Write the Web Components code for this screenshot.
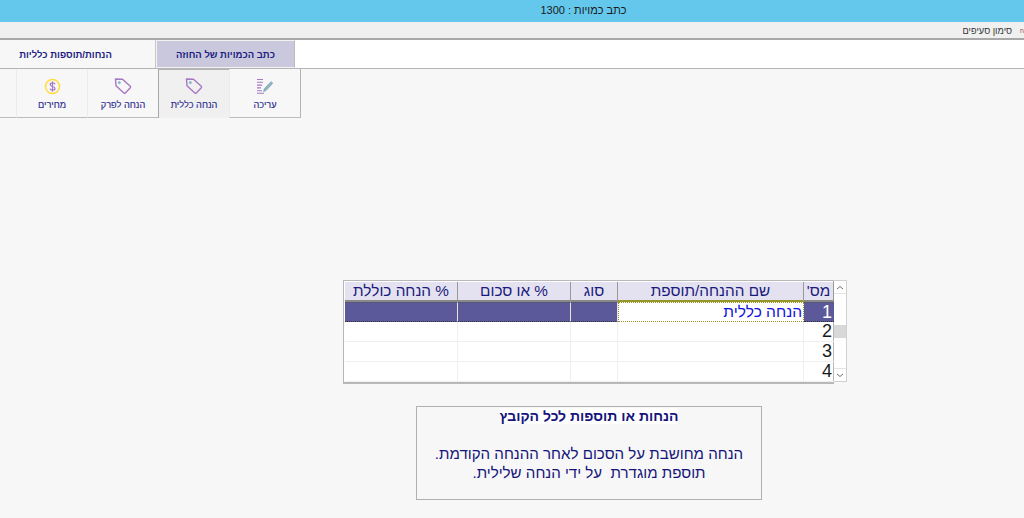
<!DOCTYPE html>
<html lang="he">
<head>
<meta charset="utf-8">
<title>כתב כמויות</title>
<style>
html, body { margin: 0; padding: 0; height: 100%; background: #f7f7f7; overflow: hidden; }
body { width: 1024px; height: 518px; font-family: "Liberation Sans", "DejaVu Sans", sans-serif; display: flex; flex-direction: column; }
</style>
</head>
<body>
<app-titlebar>כתב כמויות : 1300</app-titlebar>
<app-menubar></app-menubar>
<app-tabs></app-tabs>
<app-ribbon></app-ribbon>
<discount-grid></discount-grid>
<info-box></info-box>

<script>
const tagIcon = `<svg width="18" height="17" viewBox="0 0 18 17" fill="none" stroke="#a678c4" stroke-width="1.4" stroke-linejoin="round">
  <path d="M1.500 1 L8.500 1.300 L16.300 8.300 Q17 9 16.300 9.800 L11.300 15 Q10.600 15.700 9.800 15 L2 7.800 Z"/>
  <circle cx="5.300" cy="4.600" r="1.200" fill="#7fb4cc" stroke="#7fb4cc" stroke-width="0.5"/>
</svg>`;

const editIcon = `<svg width="18" height="17" viewBox="0 0 18 17" fill="none">
  <g stroke="#a678c4" stroke-width="1.100">
    <path d="M1 1.500h6M1 4.300h6M1 7.100h5M1 9.900h4M1 12.700h5M1 15.300h7"/>
  </g>
  <path d="M7.500 13.500 L8.300 10.700 L14.500 4.200 Q15.300 3.600 16.200 4.400 Q16.900 5.200 16.100 6 L10 12.600 Z" fill="#8fb4c6" stroke="#6e94a8" stroke-width="0.6"/>
</svg>`;

const dollarIcon = `<svg width="17" height="17" viewBox="0 0 17 17" fill="none">
  <circle cx="8.500" cy="8.500" r="7" stroke="#ffdc3c" stroke-width="1.500"/>
  <path d="M11 6.200 Q10.600 4.900 8.500 4.900 Q6.200 4.900 6.200 6.600 Q6.200 8 8.500 8.500 Q11 9 11 10.500 Q11 12.100 8.500 12.100 Q6.300 12.100 6 10.700 M8.500 3.600V13.400" stroke="#a678c4" stroke-width="1.200"/>
</svg>`;

class AppTitlebar extends HTMLElement {
  constructor() {
    super();
    this.attachShadow({ mode: 'open' }).innerHTML = `
      <style>
        :host { display: flex; box-sizing: border-box; height: 22px; background: #64c8ec; align-items: center; justify-content: center; color: #1a1a1a; font-size: 11px; padding: 0 0 2px 143px; }
      </style>
      <slot></slot>`;
  }
}

class AppMenubar extends HTMLElement {
  constructor() {
    super();
    this.attachShadow({ mode: 'open' }).innerHTML = `
      <style>
        :host { display: flex; box-sizing: border-box; height: 18px; background: #f0f0f0; border-bottom: 2px solid #a8a8a8; direction: rtl; align-items: center; font-size: 9.200px; color: #333; gap: 8px; padding-top: 1px; }
        .next { font-size: 6px; color: #a03030; }
      </style>
      <span class="next">ח</span><span>סימון סעיפים</span>`;
  }
}

class AppTabs extends HTMLElement {
  constructor() {
    super();
    this.attachShadow({ mode: 'open' }).innerHTML = `
      <style>
        :host { display: flex; box-sizing: border-box; height: 29px; background: #fff; border-bottom: 1px solid #b4b4b4; }
        div { box-sizing: border-box; display: flex; align-items: center; justify-content: center; font-size: 9.500px; font-weight: bold; color: #1c1c82; direction: rtl; }
        .off { width: 156px; background: #f7f7f7; border-right: 1px solid #c8c8c8; padding-right: 24px; }
        .on { width: 139px; background: #c9c8dc; border: 1px solid #f2f2f2; border-right-color: #bbb; }
      </style>
      <div class="off">הנחות/תוספות כלליות</div>
      <div class="on">כתב הכמויות של החוזה</div>`;
  }
}

class RibbonButton extends HTMLElement {
  static get observedAttributes() { return ['label', 'icon', 'active']; }
  connectedCallback() { this.render(); }
  attributeChangedCallback() { this.render(); }
  render() {
    if (!this.shadowRoot) this.attachShadow({ mode: 'open' });
    const icons = { tag: tagIcon, edit: editIcon, dollar: dollarIcon };
    const active = this.hasAttribute('active');
    this.shadowRoot.innerHTML = `
      <style>
        :host { display: block; width: 71px; box-sizing: border-box; background: ${active ? '#f0f0f0' : '#f7f7f7'};
          border-left: 1px solid ${active ? '#a8a8a8' : '#ececec'};
          border-top: 1px solid ${active ? '#b4b4b4' : 'transparent'};
          border-bottom: ${active ? '0' : '1px solid #bcbcbc'}; }
        .b { display: flex; flex-direction: column; align-items: center; padding-top: 8px; box-sizing: border-box; gap: 5px; }
        svg { display: block; }
        span { font-size: 9.200px; line-height: 10px; color: #2c2c90; direction: rtl; -webkit-text-stroke: 0.15px #2c2c90; white-space: nowrap; }
      </style>
      <div class="b">${icons[this.getAttribute('icon')] || ''}<span>${this.getAttribute('label') || ''}</span></div>`;
  }
}

class AppRibbon extends HTMLElement {
  constructor() {
    super();
    this.attachShadow({ mode: 'open' }).innerHTML = `
      <style>
        :host { display: flex; box-sizing: border-box; width: 301px; height: 49px; border-right: 1px solid #b4b4b4; }
        .spacer { width: 16px; box-sizing: border-box; border-bottom: 1px solid #bcbcbc; }
      </style>
      <div class="spacer"></div>
      <ribbon-button icon="dollar" label="מחירים"></ribbon-button>
      <ribbon-button icon="tag" label="הנחה לפרק"></ribbon-button>
      <ribbon-button icon="tag" label="הנחה כללית" active></ribbon-button>
      <ribbon-button icon="edit" label="עריכה"></ribbon-button>`;
  }
}

class DiscountGrid extends HTMLElement {
  constructor() {
    super();
    const cols = '113px 113px 47px 186px 30px';
    const heads = ['% הנחה כוללת', '% או סכום', 'סוג', 'שם ההנחה/תוספת', "מס'"];
    const headHtml = heads.map(h => `<div class="h">${h}</div>`).join('');
    const rows = [1, 2, 3, 4].map(n => {
      const sel = n === 1;
      return `<div class="c ${sel ? 'sel' : ''}"></div><div class="c ${sel ? 'sel' : ''}"></div><div class="c ${sel ? 'sel' : ''}"></div>` +
        `<div class="c name ${sel ? 'cur' : ''}">${sel ? 'הנחה כללית' : ''}</div>` +
        `<div class="c num ${sel ? 'sel numsel' : ''}">${n}</div>`;
    }).join('');
    this.attachShadow({ mode: 'open' }).innerHTML = `
      <style>
        :host { display: flex; width: 504px; height: 104px; margin: 162px 0 0 343px; box-sizing: border-box; align-items: flex-start; }
        .grid { box-sizing: border-box; width: 491px; height: 104px; background: #fff; border: 1px solid #b8b8b8; border-bottom-width: 2px; padding: 1px 1px 0 1px; display: grid; grid-template-columns: ${cols}; grid-template-rows: 20px 20px 20px 20px 20px; }
        .h { background: #e4e2f0; color: #1a1a7e; font-size: 15.300px; display: flex; align-items: center; justify-content: center; direction: rtl; border-right: 1px solid #999; border-bottom: 2px solid #888; box-sizing: border-box; white-space: nowrap; }
        .h:nth-child(4) { border-bottom-color: #96962a; }
        .c { box-sizing: border-box; border-right: 1px solid #efefef; border-bottom: 1px solid #efefef; font-size: 15.500px; display: flex; align-items: center; direction: rtl; color: #1a1a1a; }
        .sel { background: #5b5999; border-right-color: #e4e4e4; border-bottom: 1px dotted #333; border-top: 1px dotted #555; }
        .numsel { color: #fff; }
        .name { padding-right: 1px; }
        .cur { color: #1010e0; border: 1px dotted #96962a; }
        .num { padding-right: 2px; border-right: 0; font-size: 18px; }
        .bar { box-sizing: border-box; width: 13px; height: 102px; border: 1px solid #d0d0d0; border-left: 0; background: #fff; display: flex; flex-direction: column; }
        .btn { height: 12px; background: #fff; display: flex; align-items: center; justify-content: center; }
        .top { border-bottom: 1px solid #e4e4e4; }
        .bot { border-top: 1px solid #e4e4e4; }
        .thumb { height: 13px; background: #d8d8d8; margin-top: 31px; }
        .btn svg { display: block; }
      </style>
      <div class="grid">${headHtml}${rows}</div>
      <div class="bar">
        <div class="btn top"><svg width="8" height="5" viewBox="0 0 8 5" fill="none" stroke="#707070"><path d="M1 4L4 1.500L7 4"/></svg></div>
        <div class="thumb"></div>
        <div style="flex:1"></div>
        <div class="btn bot"><svg width="8" height="5" viewBox="0 0 8 5" fill="none" stroke="#707070"><path d="M1 1L4 3.500L7 1"/></svg></div>
      </div>`;
  }
}

class InfoBox extends HTMLElement {
  constructor() {
    super();
    this.attachShadow({ mode: 'open' }).innerHTML = `
      <style>
        :host { display: block; box-sizing: border-box; width: 346px; height: 94px; margin: 22px 0 0 416px; border: 1px solid #b0b0b0; direction: rtl; text-align: center; color: #14147a; font-size: 15.100px; line-height: 19px; }
        b { display: block; font-size: 14px; line-height: 19px; height: 19px; }
        p { margin: 18px 0 0; }
      </style>
      <b><span style="background:#fff">הנחות או תוספות לכל הקובץ</span></b>
      <p>הנחה מחושבת על הסכום לאחר ההנחה הקודמת.<br>תוספת מוגדרת&nbsp; על ידי הנחה שלילית.</p>`;
  }
}

customElements.define('app-titlebar', AppTitlebar);
customElements.define('app-menubar', AppMenubar);
customElements.define('app-tabs', AppTabs);
customElements.define('ribbon-button', RibbonButton);
customElements.define('app-ribbon', AppRibbon);
customElements.define('discount-grid', DiscountGrid);
customElements.define('info-box', InfoBox);
</script>
</body>
</html>
